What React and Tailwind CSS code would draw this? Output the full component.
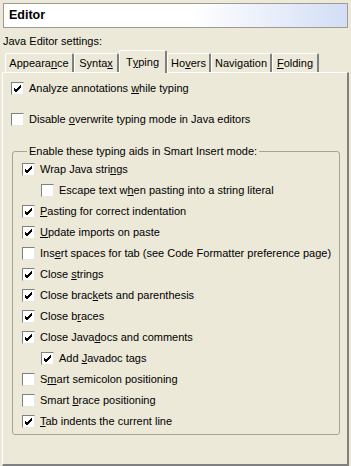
import React from 'react';

const font = { fontFamily: '"Liberation Sans", Arial, sans-serif' };

const Check = ({ checked }) => (
  <div className="w-[13px] h-[13px] shrink-0 bg-white border border-t-[#808080] border-l-[#808080] border-r-[#e8e8e0] border-b-[#e8e8e0] flex items-center justify-center">
    {checked && (
      <svg width="9" height="9" viewBox="0 0 9 9">
        <path d="M1 4 L3 6 L8 1 M1 5 L3 7 L8 2 M1 6 L3 8 L8 3" stroke="#000" strokeWidth="1" fill="none" shapeRendering="crispEdges" />
      </svg>
    )}
  </div>
);

const Row = ({ checked, children, indent, className = '' }) => (
  <div className={`flex items-center h-[13px] ${indent ? 'pl-[19px]' : ''} ${className}`}>
    <Check checked={checked} />
    <span className="ml-[5px] text-[11px] leading-none text-black whitespace-nowrap">{children}</span>
  </div>
);

const tabs = [
  { key: 'a', w: 'w-[69px]', label: <>Appeara<u>n</u>ce</> },
  { key: 's', w: 'w-[45px]', label: <>Synta<u>x</u></> },
  { key: 't', w: 'w-[48px]', label: <>T<u>y</u>ping</>, active: true },
  { key: 'h', w: 'w-[44px]', label: <>Ho<u>v</u>ers</> },
  { key: 'n', w: 'w-[61px]', label: <>Navi<u>g</u>ation</> },
  { key: 'f', w: 'w-[47px]', label: <><u>F</u>olding</> },
];

const aids = [
  { checked: true, label: <>Wrap Java stri<u>n</u>gs</> },
  { checked: false, indent: true, label: <>Escape text w<u>h</u>en pasting into a string literal</> },
  { checked: true, label: <><u>P</u>asting for correct indentation</> },
  { checked: true, label: <><u>U</u>pdate imports on paste</> },
  { checked: false, label: <>Ins<u>e</u>rt spaces for tab (see Code Formatter preference page)</> },
  { checked: true, label: <>Close <u>s</u>trings</> },
  { checked: true, label: <>Close brac<u>k</u>ets and parenthesis</> },
  { checked: true, label: <>Close b<u>r</u>aces</> },
  { checked: true, label: <>Close Java<u>d</u>ocs and comments</> },
  { checked: true, indent: true, label: <>Add <u>J</u>avadoc tags</> },
  { checked: false, label: <>S<u>m</u>art semicolon positioning</> },
  { checked: false, label: <>Smart <u>b</u>race positioning</> },
  { checked: true, label: <><u>T</u>ab indents the current line</> },
];

export default function App() {
  return (
    <div className="w-[351px] h-[466px] bg-[#ece9d8] overflow-hidden" style={font}>
      {/* header */}
      <div className="pt-[3px] px-[3px]">
        <div className="h-[25px] border border-[#9c9c94] bg-gradient-to-r from-white from-55% to-[#d3def5] flex items-center pl-[5px]">
          <span className="text-[12.5px] font-bold text-black">Editor</span>
        </div>
      </div>

      <div className="pl-[3px] mt-[6px] h-[14px] text-[11px] leading-[14px] text-black">Java Editor settings:</div>

      {/* tabs */}
      <div className="flex items-end pl-[5px] mt-[2px] h-[22px]">
        {tabs.map((t) =>
          t.active ? (
            <div
              key={t.key}
              className={`${t.w} relative z-10 -mb-[1px] h-[23px] bg-[#ece9d8] border-l border-t border-white border-r-2 border-r-[#808080] rounded-t-[2px] flex items-start justify-center pt-[3px] text-[11px] text-black`}
            >
              {t.label}
            </div>
          ) : (
            <div
              key={t.key}
              className={`${t.w} h-[19px] bg-[#ece9d8] border-l border-t border-white border-r-2 border-r-[#808080] rounded-t-[2px] flex items-center justify-center text-[11px] text-black`}
            >
              {t.label}
            </div>
          )
        )}
      </div>

      {/* panel */}
      <div className="mx-[2px] w-[347px] h-[394px] border-l border-t border-white border-r-2 border-b-2 border-r-[#808080] border-b-[#808080] pl-[8px] pt-[9px]">
        <Row checked>Analyze annotations <u>w</u>hile typing</Row>
        <Row className="mt-[18px]">Disable <u>o</u>verwrite typing mode in Java editors</Row>

        <fieldset className="mt-[19px] ml-[1px] w-[328px] border border-[#a5a597] rounded-[3px] pl-[9px] pb-[6px]">
          <legend className="ml-[5px] px-[2px] text-[11px] leading-[13px] text-black">Enable these typing aids in Smart Insert mode:</legend>
          <div className="flex flex-col gap-[8px] mt-[5px]">
            {aids.map((a, i) => (
              <Row key={i} checked={a.checked} indent={a.indent}>
                {a.label}
              </Row>
            ))}
          </div>
        </fieldset>
      </div>
    </div>
  );
}
